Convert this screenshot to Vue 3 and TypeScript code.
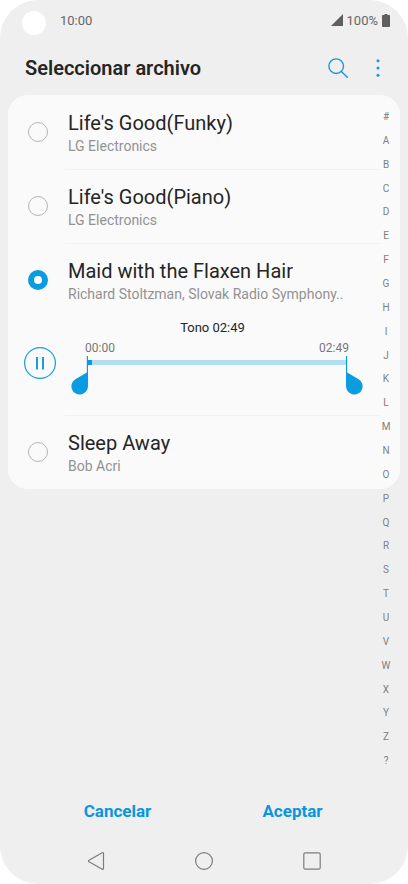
<script setup lang="ts">
import { computed, ref } from 'vue'

interface Track {
  id: string
  title: string
  artist: string
}

const tracks: Track[] = [
  { id: 'funky', title: "Life's Good(Funky)", artist: 'LG Electronics' },
  { id: 'piano', title: "Life's Good(Piano)", artist: 'LG Electronics' },
  { id: 'flaxen', title: 'Maid with the Flaxen Hair', artist: 'Richard Stoltzman, Slovak Radio Symphony..' },
  { id: 'sleep', title: 'Sleep Away', artist: 'Bob Acri' },
]

const letters: string[] = [...'#ABCDEFGHIJKLMNOPQRSTUVWXYZ?']

const duration = 169
const selected = ref<string>('flaxen')
const start = ref<number>(0)
const end = ref<number>(duration)

const clock = (seconds: number): string =>
  `${String(Math.floor(seconds / 60)).padStart(2, '0')}:${String(seconds % 60).padStart(2, '0')}`

const startPos = computed<string>(() => `${(start.value / duration) * 100}%`)
const endPos = computed<string>(() => `${(end.value / duration) * 100}%`)
</script>

<template>
  <div class="screen">
    <div class="status">
      <span class="camera"></span>
      <span class="time">10:00</span>
      <svg class="signal" viewBox="0 0 12 12" aria-hidden="true"><path d="M12 0v12H0z" /></svg>
      <span>100%</span>
      <svg class="battery" viewBox="0 0 8 13" aria-hidden="true"><path d="M2.5 0h3v1H7.2a.8.8 0 0 1 .8.8v10.400a.8.8 0 0 1-.8.8H.8a.8.8 0 0 1-.8-.8V1.800A.8.8 0 0 1 .8 1h1.700z" /></svg>
    </div>

    <header class="header">
      <h1>Seleccionar archivo</h1>
      <button type="button" class="tool" aria-label="Buscar">
        <svg viewBox="0 0 20 20"><circle cx="8.200" cy="8.200" r="7.300" /><path d="M13.400 13.400L19.300 19.300" /></svg>
      </button>
      <button type="button" class="tool" aria-label="Más opciones">
        <svg class="dots" viewBox="0 0 20 20"><circle cx="10" cy="2.700" r="1.500" /><circle cx="10" cy="10" r="1.500" /><circle cx="10" cy="17.300" r="1.500" /></svg>
      </button>
    </header>

    <main class="main">
      <ul class="card">
        <li v-for="track in tracks" :key="track.id" class="item">
          <label class="row">
            <input v-model="selected" type="radio" name="track" class="radio" :value="track.id" />
            <span class="text">
              <span class="title">{{ track.title }}</span>
              <span class="artist">{{ track.artist }}</span>
            </span>
          </label>

          <div v-if="track.id === selected" class="player">
            <div class="tone">Tono {{ clock(end - start) }}</div>
            <div class="controls">
              <button type="button" class="pause" aria-label="Pausar">
                <svg viewBox="0 0 32 32"><circle cx="16" cy="16" r="15.400" /><path d="M13 10v12.500M19 10v12.500" /></svg>
              </button>
              <div class="trim">
                <div class="times"><span>{{ clock(start) }}</span><span>{{ clock(end) }}</span></div>
                <div class="track">
                  <span class="played"></span>
                  <svg class="handle left" :style="{ left: startPos }" viewBox="0 0 18 39" aria-hidden="true"><path d="M15.800 0h1.200v30.200a8.300 8.300 0 1 1-12.200-7.300L15.800 16.500z" /></svg>
                  <svg class="handle right" :style="{ left: endPos }" viewBox="0 0 18 39" aria-hidden="true"><path d="M2.200 0H1v30.200a8.300 8.300 0 1 0 12.200-7.300L2.200 16.500z" /></svg>
                  <input v-model.number="start" class="range" type="range" min="0" :max="duration" aria-label="Inicio" />
                  <input v-model.number="end" class="range" type="range" min="0" :max="duration" aria-label="Fin" />
                </div>
              </div>
            </div>
          </div>
        </li>
      </ul>

      <nav class="index" aria-label="Índice">
        <button v-for="letter in letters" :key="letter" type="button">{{ letter }}</button>
      </nav>
    </main>

    <div class="actions">
      <button type="button">Cancelar</button>
      <button type="button">Aceptar</button>
    </div>

    <nav class="system">
      <button type="button" aria-label="Atrás">
        <svg viewBox="0 0 20 20"><path d="M16.200 1.800a.9.9 0 0 1 1.300.8v14.800a.9.9 0 0 1-1.300.8L3 10.800a.9.9 0 0 1 0-1.600z" /></svg>
      </button>
      <button type="button" aria-label="Inicio">
        <svg viewBox="0 0 20 20"><circle cx="10" cy="10" r="8.400" /></svg>
      </button>
      <button type="button" aria-label="Recientes">
        <svg viewBox="0 0 20 20"><rect x="1.800" y="1.800" width="16.400" height="16.400" rx="1.500" /></svg>
      </button>
    </nav>
  </div>
</template>

<style>
body {
  background: #fff;
}
</style>

<style scoped>
.screen {
  display: flex;
  flex-direction: column;
  box-sizing: border-box;
  min-height: 100vh;
  border-radius: 38px;
  background: #efefef;
  color: #252525;
  font-family: Roboto, sans-serif;
}

button {
  padding: 0;
  border: 0;
  background: none;
  font: inherit;
  color: inherit;
  cursor: pointer;
}

svg {
  display: block;
}

.status {
  display: flex;
  align-items: center;
  height: 40px;
  padding: 0 18px 0 22px;
  font-size: 13px;
  color: #666;
}

.camera {
  width: 24px;
  height: 24px;
  margin: 6px 14px 0 0;
  border-radius: 50%;
  background: #fff;
}

.time {
  flex: 1;
}

.signal {
  width: 12px;
  height: 12px;
  margin-right: 4px;
  fill: #5f5f5f;
}

.battery {
  width: 8px;
  height: 13px;
  margin-left: 4px;
  fill: #5f5f5f;
}

.header {
  display: flex;
  align-items: center;
  gap: 20px;
  height: 55px;
  padding: 0 20px 0 25px;
}

h1 {
  flex: 1;
  margin: 0;
  font-size: 20px;
  font-weight: 600;
}

.tool svg {
  width: 20px;
  height: 20px;
  fill: none;
  stroke: #1b97d5;
  stroke-width: 1.4;
  stroke-linecap: round;
}

.tool .dots {
  fill: #1b97d5;
  stroke: none;
}

.main {
  display: grid;
  grid-template-columns: 1fr 28px;
  flex: 1;
  padding: 0 8px;
}

.card {
  grid-area: 1 / 1 / 2 / 3;
  align-self: start;
  margin: 0;
  padding: 0 20px;
  border-radius: 20px;
  background: #fafafa;
  list-style: none;
}

.item {
  position: relative;
}

.item + .item::before {
  content: '';
  position: absolute;
  top: 0;
  right: 0;
  left: 37px;
  height: 1px;
  background: #f2f2f2;
}

.row {
  display: flex;
  align-items: center;
  gap: 20px;
  height: 74px;
}

.radio {
  box-sizing: border-box;
  width: 20px;
  height: 20px;
  margin: 0;
  border: 1px solid #b5b5b5;
  border-radius: 50%;
  appearance: none;
}

.radio:checked {
  border: 6px solid #0a9be0;
  background: #fff;
}

.text {
  display: flex;
  flex: 1;
  flex-direction: column;
  min-width: 0;
  padding-top: 2px;
  white-space: nowrap;
}

.title {
  font-size: 20px;
  line-height: 26px;
}

.artist {
  font-size: 14px;
  line-height: 20px;
  color: #929292;
}

.player {
  height: 98px;
}

.tone {
  padding: 3px 16px 4px 33px;
  font-size: 13px;
  line-height: 16px;
  text-align: center;
}

.controls {
  display: flex;
  align-items: flex-start;
  gap: 32px;
  margin-left: -4px;
}

.pause {
  margin-top: 7px;
}

.pause svg {
  width: 32px;
  height: 32px;
  fill: none;
  stroke: #1b9bdb;
  stroke-width: 1.2;
}

.pause path {
  stroke-width: 2;
}

.trim {
  flex: 1;
  margin-right: 34px;
}

.times {
  display: flex;
  justify-content: space-between;
  margin: 0 -3px;
  font-size: 12px;
  line-height: 16px;
  color: #777;
}

.track {
  position: relative;
  height: 5px;
  margin-top: 4px;
  background: #b2def2;
}

.played {
  display: block;
  width: 4px;
  height: 5px;
  background: #0a9be0;
}

.handle {
  position: absolute;
  top: -4px;
  width: 18px;
  height: 39px;
  fill: #0a9be0;
}

.left {
  margin-left: -17px;
}

.right {
  margin-left: -1px;
}

.range {
  position: absolute;
  inset: -4px -16px auto;
  height: 39px;
  margin: 0;
  opacity: 0;
  pointer-events: none;
}

.range::-webkit-slider-thumb {
  pointer-events: auto;
}

.index {
  display: flex;
  grid-area: 1 / 2 / 2 / 3;
  z-index: 1;
  flex-direction: column;
  padding: 10px 0 12px;
}

.index button {
  flex: 1;
  font-size: 10px;
  line-height: 12px;
  color: #808080;
}

.actions {
  display: grid;
  grid-template-columns: 1fr 1fr;
  height: 52px;
  padding: 0 28px 0 30px;
  font-size: 17px;
  font-weight: 700;
  color: #0a96dc;
}

.system {
  display: flex;
  align-items: center;
  justify-content: space-between;
  height: 47px;
  padding: 0 86px;
}

.system svg {
  width: 20px;
  height: 20px;
  fill: none;
  stroke: #7c7c7c;
  stroke-width: 1.2;
}
</style>
